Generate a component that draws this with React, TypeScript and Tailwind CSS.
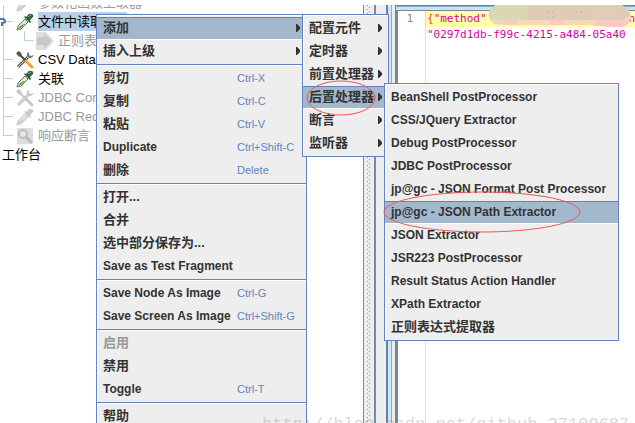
import React from 'react'
import clsx from 'clsx'

type Entry = {
  label: string
  shortcut?: string
  hasSub?: boolean
  selected?: boolean
  disabled?: boolean
}

const mainGroups: Entry[][] = [
  [
    { label: '添加', hasSub: true, selected: true },
    { label: '插入上级', hasSub: true },
  ],
  [
    { label: '剪切', shortcut: 'Ctrl-X' },
    { label: '复制', shortcut: 'Ctrl-C' },
    { label: '粘贴', shortcut: 'Ctrl-V' },
    { label: 'Duplicate', shortcut: 'Ctrl+Shift-C' },
    { label: '删除', shortcut: 'Delete' },
  ],
  [
    { label: '打开...' },
    { label: '合并' },
    { label: '选中部分保存为...' },
    { label: 'Save as Test Fragment' },
  ],
  [
    { label: 'Save Node As Image', shortcut: 'Ctrl-G' },
    { label: 'Save Screen As Image', shortcut: 'Ctrl+Shift-G' },
  ],
  [
    { label: '启用', disabled: true },
    { label: '禁用' },
    { label: 'Toggle', shortcut: 'Ctrl-T' },
  ],
  [{ label: '帮助' }],
]

const addGroups: Entry[][] = [
  [
    { label: '配置元件', hasSub: true },
    { label: '定时器', hasSub: true },
    { label: '前置处理器', hasSub: true },
    { label: '后置处理器', hasSub: true, selected: true },
    { label: '断言', hasSub: true },
    { label: '监听器', hasSub: true },
  ],
]

const postGroups: Entry[][] = [
  [
    { label: 'BeanShell PostProcessor' },
    { label: 'CSS/JQuery Extractor' },
    { label: 'Debug PostProcessor' },
    { label: 'JDBC PostProcessor' },
    { label: 'jp@gc - JSON Format Post Processor' },
    { label: 'jp@gc - JSON Path Extractor', selected: true },
    { label: 'JSON Extractor' },
    { label: 'JSR223 PostProcessor' },
    { label: 'Result Status Action Handler' },
    { label: 'XPath Extractor' },
    { label: '正则表达式提取器' },
  ],
]

const isCjk = (text: string) => /[\u4e00-\u9fff]/.test(text)

const MenuItem = ({ label, shortcut, hasSub, selected, disabled }: Entry) => (
  <button
    role="menuitem"
    disabled={disabled}
    className={clsx(
      'flex h-[23px] w-full items-center border-y pl-1.5 text-left font-bold whitespace-nowrap',
      selected ? 'border-t-[#6382bf] border-b-white bg-[#a3b8cc]' : 'border-transparent',
      disabled ? 'text-[#999999]' : 'text-[#333333]',
      isCjk(label) ? 'text-[13px]' : 'text-xs',
    )}
  >
    <span className="flex-1 pb-0.5">{label}</span>
    {shortcut && (
      <span className="w-[69px] pb-px text-[11px] font-normal text-[#6382bf]">{shortcut}</span>
    )}
    {hasSub && (
      <svg viewBox="0 0 4 8" className="mr-1.5 mb-px h-2 w-1 shrink-0" fill="#333333">
        <path d="M0 0H1L4 3V5L1 8H0Z" />
      </svg>
    )}
  </button>
)

const Menu = ({ groups, className }: { groups: Entry[][]; className: string }) => (
  <div
    role="menu"
    className={clsx(
      'absolute border border-[#6382bf] bg-[#eeeeee] pt-0.5 pb-px shadow-[inset_1px_1px_0_#ffffff]',
      className,
    )}
  >
    {groups.map((group, i) => (
      <React.Fragment key={i}>
        {i > 0 && (
          <div role="separator" className="h-1 py-px">
            <div className="h-0.5 border-t border-b border-t-[#6382bf] border-b-white" />
          </div>
        )}
        {group.map((item) => (
          <MenuItem key={item.label} {...item} />
        ))}
      </React.Fragment>
    ))}
  </div>
)

const Dropper = ({ off }: { off?: boolean }) => (
  <svg viewBox="0 0 18 18" className="h-[18px] w-[18px] shrink-0">
    <path
      d="M1 17L2 13L9 6L12 9L5 16Z"
      fill={off ? '#e2e2e2' : '#dce8d8'}
      stroke={off ? '#c2c2c2' : '#6c756c'}
    />
    <path d="M2 16L4 13L8 11L9 11L5 15Z" fill={off ? '#cccccc' : '#5fa548'} />
    <path
      d="M8 4L14 10L15 9L14 7L17 4Q18 1 15 1Q13 0 11 3L10 4L9 3Z"
      fill={off ? '#c8c8c8' : '#35603a'}
    />
    <path d="M12 4L15 2" stroke={off ? '#dddddd' : '#8cab8d'} />
  </svg>
)

const Tools = ({ off }: { off?: boolean }) => (
  <svg viewBox="0 0 18 18" className="h-[18px] w-[18px] shrink-0" fill="none">
    <path d="M2 16L12 6" stroke={off ? '#c6c6c6' : '#555555'} strokeWidth="3" />
    <path d="M2 16L12 6" stroke="#dddddd" />
    <path
      d="M13 1Q10 2 11 5L13 7Q16 8 18 4L15 5L13 4Z"
      fill={off ? '#c6c6c6' : '#777777'}
    />
    <path d="M3 3L10 10" stroke={off ? '#c6c6c6' : '#444444'} strokeWidth="2" />
    <path d="M0 2L3 0L6 3L3 6Z" fill={off ? '#c6c6c6' : '#555555'} />
    <path d="M10 10L16 16" stroke={off ? '#c9c9c9' : '#e9a820'} strokeWidth="3" strokeLinecap="round" />
  </svg>
)

const Arrow = () => (
  <svg viewBox="0 0 18 18" className="h-[18px] w-[18px] shrink-0">
    <path d="M0 0H10L18 9L10 18H0Z" fill="#dddddd" />
    <path d="M1 5H8V2L16 9L8 16V13H1Z" fill="#c8c8c8" />
  </svg>
)

const Magnifier = () => (
  <svg viewBox="0 0 18 18" className="h-[18px] w-[18px] shrink-0">
    <path d="M1 1H17V17H1Z" fill="#dddddd" />
    <circle cx="7" cy="7" r="4" fill="#e6e6e6" stroke="#bcbcbc" strokeWidth="2" />
    <path d="M10 10L16 16" stroke="#bcbcbc" strokeWidth="3" />
  </svg>
)

type TreeNode = {
  label: string
  icon: React.ReactNode
  off?: boolean
  selected?: boolean
  child?: boolean
}

const nodes: TreeNode[] = [
  { label: '参数化函数上取器', icon: <Dropper off />, off: true },
  { label: '文件中读取', icon: <Dropper />, selected: true },
  { label: '正则表达', icon: <Arrow />, off: true, child: true },
  { label: 'CSV Data S', icon: <Tools /> },
  { label: '关联', icon: <Dropper /> },
  { label: 'JDBC Con', icon: <Tools off />, off: true },
  { label: 'JDBC Req', icon: <Dropper off />, off: true },
  { label: '响应断言', icon: <Magnifier />, off: true },
]

const Tree = () => (
  <ul className="relative -mt-3 text-[13px] text-black">
    <li aria-hidden className="absolute top-0 left-[3px] h-[143px] w-px bg-[#b8cfe5]" />
    {nodes.map(({ label, icon, off, selected, child }) => (
      <li
        key={label}
        className={clsx(
          'relative flex h-[19px] items-center whitespace-nowrap',
          child ? 'pl-6' : 'pl-1',
        )}
      >
        {child && (
          <span className="-mt-2.5 h-2.5 w-2.5 shrink-0 border-b border-l border-[#b8cfe5]" />
        )}
        {!child && <span className="h-px w-[9px] shrink-0 bg-[#b8cfe5]" />}
        <span className={clsx('flex', child ? 'ml-0.5' : 'ml-[3px]')}>{icon}</span>
        <span
          className={clsx(
            'ml-1 leading-[19px]',
            off && 'text-[#999999]',
            selected && 'bg-[#b8cfe5] pr-6',
          )}
        >
          {label}
        </span>
        {selected && (
          <svg
            viewBox="0 0 6 8"
            className="absolute left-0 h-2 w-1.5"
            fill="none"
            stroke="#5674b0"
            strokeWidth="2"
          >
            <path d="M0 1H3Q6 2 5 4Q4 5 2 5V8" />
          </svg>
        )}
      </li>
    ))}
    <li className="h-[19px] pl-0.5 leading-[19px]">工作台</li>
  </ul>
)

const Divider = () => (
  <div className="flex w-3 shrink-0 justify-center border-r-2 border-[#7a8a99] bg-[#eeeeee]">
    <svg className="h-full w-1">
      <defs>
        <pattern id="grip" width="4" height="4" patternUnits="userSpaceOnUse">
          <path d="M0 0H1V1H0ZM2 2H3V3H2Z" fill="#8b95a0" />
        </pattern>
      </defs>
      <rect width="100%" height="100%" fill="url(#grip)" />
    </svg>
  </div>
)

const Smudge = () => (
  <svg viewBox="0 0 143 22" className="absolute -top-1.5 left-[62px] h-[22px] w-[143px]">
    <path d="M8 0H134Q143 5 143 12Q143 19 134 22H120L100 20H24L6 19Q0 14 1 8Q2 3 8 0Z" fill="#f8d8b8" />
    <path d="M8 0H134Q141 4 142 11L135 15H3Q0 12 1 8Q2 3 8 0Z" fill="#dfccb5" />
    <path d="M8 0H40V15H3Q0 12 1 8Q2 3 8 0Z" fill="#d9d8b4" />
    <path d="M14 15H30V20L6 19ZM62 15H78V20H62ZM106 15H135L141 14Q142 20 134 22H120L106 20Z" fill="#f9cbc4" />
    <path d="M59 7H60M64 7H65M88 7H89M93 7H94M59 12H60M64 12H65M93 12H94" stroke="#b49cc0" />
    <path d="M104 5H130M102 9H134M105 12H132" stroke="#e8dccb" strokeDasharray="1 3" />
  </svg>
)

const Editor = () => (
  <div className="flex min-w-0 flex-1 border-l-2 border-[#6382a5] bg-[#eeeeee]">
    <div className="w-[3px] shrink-0 bg-[#cfe6f5]" />
    <div className="w-1 shrink-0 border-l border-[#a9a3b3]" />
    <div className="flex min-w-0 flex-1 flex-col border-t border-l border-[#6382bf]">
      <div className="h-1 border-t border-[#8ba5cf] bg-[#c8e2f2]" />
      <div className="flex flex-1 border-t border-l-2 border-[#7a8a99] bg-white font-['DejaVu_Sans_Mono','Noto_Sans_CJK_SC',monospace] text-[11px] leading-4">
        <div className="w-7 shrink-0 border-r border-[#dddddd] pr-3 text-right text-[#7f8a7f]">1</div>
        <div className="min-w-0 flex-1 whitespace-pre text-[#dc009c]">
          <div className="relative flex bg-[#ffffaa] pl-px">
            <span className="text-[#ff3a20]">{'{'}</span>
            <span>"method"</span>
            <Smudge />
            <span className="ml-[142px]">n</span>
          </div>
          <div className="pl-px">"0297d1db-f99c-4215-a484-05a40</div>
        </div>
      </div>
    </div>
  </div>
)

export default function App() {
  return (
    <main className="relative flex h-screen flex-col overflow-hidden bg-white pt-[5px] font-['Liberation_Sans','Noto_Sans_CJK_SC',sans-serif]">
      <div className="flex min-h-0 flex-1 overflow-hidden">
        <section className="w-[364px] shrink-0 overflow-hidden border-r border-[#7a8a99]">
          <Tree />
        </section>
        <Divider />
        <div className="w-2.5 shrink-0 bg-[#eeeeee]" />
        <Editor />
      </div>
      <Menu groups={mainGroups} className="top-3.5 left-24 w-[211px]" />
      <Menu groups={addGroups} className="top-3.5 left-[302px] w-[87px]" />
      <Menu groups={postGroups} className="top-[83px] left-[384px] w-[235px]" />

      {/* Hand-drawn marks over the menus */}
      <svg
        className="pointer-events-none absolute top-0 left-0 h-full w-full"
        fill="none"
        stroke="#ee5555"
      >
        <ellipse cx="341" cy="98" rx="34" ry="17" />
        <ellipse cx="482" cy="212" rx="98" ry="20" />
      </svg>

      <p className="pointer-events-none absolute top-[415px] left-[262px] font-['Liberation_Mono',monospace] text-[17px] leading-5 whitespace-nowrap text-[#999999]/40">
        http://blog.csdn.net/github_27109687
      </p>
    </main>
  )
}
